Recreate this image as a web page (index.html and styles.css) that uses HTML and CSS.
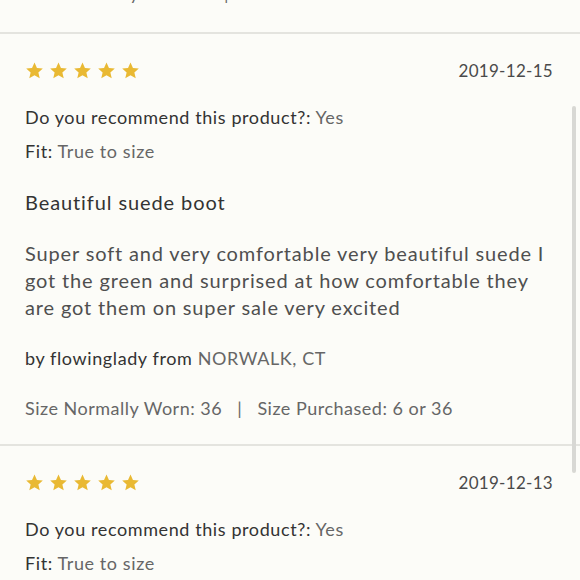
FILE: index.html
```html
<!DOCTYPE html>
<html>
<head>
<meta charset="utf-8">
<link rel="stylesheet" href="styles.css">
</head>
<body>
<div class="page">
  <div class="list">
    <section class="review partial">
      <p class="sizes">Size Normally Worn: ? <span class="sep">|</span> Size Purchased: ?</p>
    </section>

    <section class="review">
      <div class="head">
        <div class="stars">
          <svg viewBox="0 0 24 24"><path d="M12 1.8l3.1 6.9 7.4.7-5.6 5 1.7 7.4L12 17.9l-6.6 3.9 1.7-7.4-5.6-5 7.4-.7z"/></svg>
          <svg viewBox="0 0 24 24"><path d="M12 1.8l3.1 6.9 7.4.7-5.6 5 1.7 7.4L12 17.9l-6.6 3.9 1.7-7.4-5.6-5 7.4-.7z"/></svg>
          <svg viewBox="0 0 24 24"><path d="M12 1.8l3.1 6.9 7.4.7-5.6 5 1.7 7.4L12 17.9l-6.6 3.9 1.7-7.4-5.6-5 7.4-.7z"/></svg>
          <svg viewBox="0 0 24 24"><path d="M12 1.8l3.1 6.9 7.4.7-5.6 5 1.7 7.4L12 17.9l-6.6 3.9 1.7-7.4-5.6-5 7.4-.7z"/></svg>
          <svg viewBox="0 0 24 24"><path d="M12 1.8l3.1 6.9 7.4.7-5.6 5 1.7 7.4L12 17.9l-6.6 3.9 1.7-7.4-5.6-5 7.4-.7z"/></svg>
        </div>
        <span class="date">2019-12-15</span>
      </div>
      <p class="field q"><span class="label">Do you recommend this product?:</span> Yes</p>
      <p class="field fit"><span class="label">Fit:</span> True to size</p>
      <h3 class="title">Beautiful suede boot</h3>
      <p class="body">Super soft and very comfortable very beautiful suede I got the green and surprised at how comfortable they are got them on super sale very excited</p>
      <p class="field by"><span class="label">by flowinglady from</span> NORWALK, CT</p>
      <p class="sizes">Size Normally Worn: 36 <span class="sep">|</span> Size Purchased: 6 or 36</p>
    </section>

    <section class="review">
      <div class="head">
        <div class="stars">
          <svg viewBox="0 0 24 24"><path d="M12 1.8l3.1 6.9 7.4.7-5.6 5 1.7 7.4L12 17.9l-6.6 3.9 1.7-7.4-5.6-5 7.4-.7z"/></svg>
          <svg viewBox="0 0 24 24"><path d="M12 1.8l3.1 6.9 7.4.7-5.6 5 1.7 7.4L12 17.9l-6.6 3.9 1.7-7.4-5.6-5 7.4-.7z"/></svg>
          <svg viewBox="0 0 24 24"><path d="M12 1.8l3.1 6.9 7.4.7-5.6 5 1.7 7.4L12 17.9l-6.6 3.9 1.7-7.4-5.6-5 7.4-.7z"/></svg>
          <svg viewBox="0 0 24 24"><path d="M12 1.8l3.1 6.9 7.4.7-5.6 5 1.7 7.4L12 17.9l-6.6 3.9 1.7-7.4-5.6-5 7.4-.7z"/></svg>
          <svg viewBox="0 0 24 24"><path d="M12 1.8l3.1 6.9 7.4.7-5.6 5 1.7 7.4L12 17.9l-6.6 3.9 1.7-7.4-5.6-5 7.4-.7z"/></svg>
        </div>
        <span class="date">2019-12-13</span>
      </div>
      <p class="field q"><span class="label">Do you recommend this product?:</span> Yes</p>
      <p class="field fit"><span class="label">Fit:</span> True to size</p>
    </section>
  </div>
  <div class="scrollbar"></div>
</div>
</body>
</html>
```

FILE: styles.css
```css
html, body {
  margin: 0;
  padding: 0;
  height: 100%;
  overflow: hidden;
  background: #fcfcf8;
}

body {
  font-family: Lato, "Noto Sans", sans-serif;
  color: #555;
}

.page {
  position: relative;
  width: 580px;
  height: 580px;
  overflow: hidden;
}

.list {
  display: flex;
  flex-direction: column;
  margin-top: -19px;
}

.review {
  display: flex;
  flex-direction: column;
  padding: 24px 27px 24px 25px;
  border-bottom: 2px solid #e4e4df;
}

.head {
  display: flex;
  justify-content: space-between;
  align-items: center;
  height: 24px;
}

.stars {
  display: flex;
  gap: 5px;
  margin-left: 0;
}

.stars svg {
  width: 19px;
  height: 19px;
  fill: #e9b933;
}

.date {
  font-size: 17px;
  letter-spacing: 0.3px;
  color: #4a4a4a;
}

.review .field {
  margin: 0;
  font-size: 18px;
  line-height: 24px;
  letter-spacing: 0.6px;
  color: #666;
}

.label {
  color: #333;
}

.review .q {
  margin-top: 23px;
}

.review .fit {
  margin-top: 10px;
}

.review .title {
  margin: 26px 0 0;
  font-size: 20px;
  line-height: 26px;
  font-weight: normal;
  letter-spacing: 0.9px;
  color: #333;
}

.review .body {
  margin: 25px 0 0;
  font-size: 20px;
  line-height: 27px;
  letter-spacing: 0.85px;
  color: #4f4f4f;
}

.review .by {
  margin-top: 25px;
}

.review .sizes {
  margin: 26px 0 0;
  font-size: 18px;
  line-height: 24px;
  letter-spacing: 0.5px;
  color: #666;
}

.partial {
  padding-top: 0;
  padding-bottom: 27px;
}

.review.partial .sizes {
  margin-top: 0;
}

.sep {
  margin: 0 10px;
}

.scrollbar {
  position: absolute;
  left: 572px;
  top: 106px;
  width: 4px;
  height: 367px;
  border-radius: 2px;
  background: #d8d8d4;
}
```
